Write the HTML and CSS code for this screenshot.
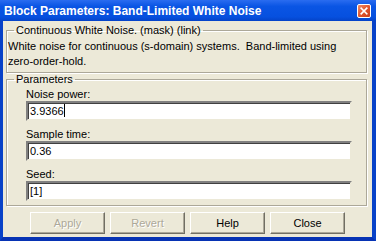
FILE: index.html
```html
<!DOCTYPE html>
<html lang="en">
<head>
  <meta charset="UTF-8">
  <title>Block Parameters: Band-Limited White Noise</title>
  <link rel="stylesheet" href="styles.css">
</head>
<body>
  <div class="window">
    <div class="titlebar">
      <span class="title">Block Parameters: Band-Limited White Noise</span>
      <button class="close-btn" title="Close">
        <svg viewBox="0 0 13 13">
          <path d="M3.5 3.5l6 6M9.5 3.5l-6 6" stroke="#fff" stroke-width="1.8" stroke-linecap="square"></path>
        </svg>
      </button>
    </div>
    <div class="frame">
      <fieldset class="group group-desc">
        <legend>Continuous White Noise. (mask) (link)</legend>
        <div class="desc">
          White noise for continuous (s-domain) systems.&nbsp; Band-limited using<br>zero-order-hold.
        </div>
      </fieldset>

      <fieldset class="group group-params">
        <legend>Parameters</legend>
        <div class="params">
          <label class="param-label">Noise power:</label>
          <div class="field">3.9366<span class="caret"></span></div>
          <label class="param-label">Sample time:</label>
          <div class="field">0.36</div>
          <label class="param-label">Seed:</label>
          <div class="field">[1]</div>
        </div>
      </fieldset>

      <div class="buttons">
        <button class="btn" disabled>Apply</button>
        <button class="btn" disabled>Revert</button>
        <button class="btn">Help</button>
        <button class="btn">Close</button>
      </div>
    </div>
  </div>
</body>
</html>
```

FILE: styles.css
```css
body {
  margin: 0;
  background: #fff;
  font-family: "Liberation Sans", Arial, sans-serif;
  font-size: 11px;
  color: #000;
}
.window {
  width: 376px;
  height: 241px;
  display: flex;
  flex-direction: column;
}
.titlebar {
  height: 21px;
  flex: none;
  display: flex;
  align-items: center;
  padding: 0 4px 0 4px;
  background: linear-gradient(#2a6cf0, #0a55e4 30%, #0650df 80%, #0443c8);
}
.title {
  flex: 1;
  color: #fff;
  font-weight: bold;
  font-size: 12px;
  white-space: nowrap;
}
.close-btn {
  width: 14px;
  height: 14px;
  padding: 0;
  margin-right: 1px;
  border: 1px solid #fff;
  border-radius: 2px;
  background: linear-gradient(135deg, #f08a66, #e0522a 55%, #c6401c);
  display: flex;
}
.close-btn svg {
  width: 12px;
  height: 12px;
}
.frame {
  flex: 1;
  background: #ece9d8;
  border-left: 3px solid #0842c8;
  border-right: 4px solid #0842c8;
  border-bottom: 4px solid #0733b4;
  display: flex;
  flex-direction: column;
}
.group {
  margin: 0 5px 0 3px;
  padding: 0;
  border: 1px solid #aca899;
  box-shadow: 1px 1px 0 #fff, inset 1px 1px 0 #fff;
}
.group legend {
  margin-left: 7px;
  padding: 0 2px;
  line-height: 13px;
}
.group-desc {
  margin-top: 3px;
}
.desc {
  padding: 2px 0 3px 1px;
  line-height: 15px;
}
.params {
  display: flex;
  flex-direction: column;
  padding: 2px 14px 4px 19px;
}
.param-label {
  line-height: 13px;
}
.field {
  height: 16px;
  line-height: 16px;
  padding: 0 2px;
  margin: 0 0 7px;
  background: #fff;
  border: 2px solid;
  border-color: #808080 #ece9d8 #ece9d8 #808080;
  box-shadow: inset 1px 1px 0 #404040;
}
.params .field:last-child {
  margin-bottom: 0;
}
.caret {
  display: inline-block;
  width: 1px;
  height: 13px;
  background: #000;
  vertical-align: -2px;
}
.buttons {
  display: flex;
  gap: 5px;
  padding: 6px 0 0 27px;
}
.btn {
  width: 75px;
  height: 22px;
  padding: 0;
  font-family: "Liberation Sans", Arial, sans-serif;
  font-size: 11px;
  color: #000;
  background: #ece9d8;
  border: 1px solid;
  border-color: #fff #716f64 #716f64 #fff;
  box-shadow: inset -1px -1px 0 #aca899;
}
.btn:disabled {
  color: #aca899;
  text-shadow: 1px 1px 0 #fff;
}
```
